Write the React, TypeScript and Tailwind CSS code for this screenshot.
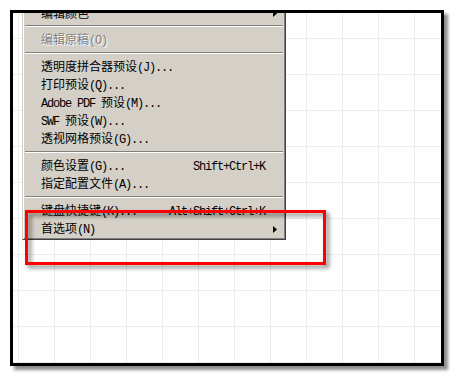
type Item =
  | { kind: "item"; label: string; shortcut?: string; submenu?: boolean; disabled?: boolean }
  | { kind: "sep" };

const items: Item[] = [
  { kind: "item", label: "编辑颜色", submenu: true },
  { kind: "sep" },
  { kind: "item", label: "编辑原稿(O)", disabled: true },
  { kind: "sep" },
  { kind: "item", label: "透明度拼合器预设(J)..." },
  { kind: "item", label: "打印预设(Q)..." },
  { kind: "item", label: "Adobe PDF 预设(M)..." },
  { kind: "item", label: "SWF 预设(W)..." },
  { kind: "item", label: "透视网格预设(G)..." },
  { kind: "sep" },
  { kind: "item", label: "颜色设置(G)...", shortcut: "Shift+Ctrl+K" },
  { kind: "item", label: "指定配置文件(A)..." },
  { kind: "sep" },
  { kind: "item", label: "键盘快捷键(K)...", shortcut: "Alt+Shift+Ctrl+K" },
  { kind: "item", label: "首选项(N)", submenu: true },
];

// ascii runs use the narrow mono face, like the half-width latin of the original menu font
function MixedText({ text }: { text: string }) {
  const parts = text.match(/[\x00-\x7f]+|[^\x00-\x7f]+/g) ?? [];
  return (
    <span className="whitespace-pre">
      {parts.map((p, i) =>
        /^[\x00-\x7f]/.test(p) ? (
          <span
            key={i}
            className="font-['Liberation_Mono',monospace] text-[12px] tracking-[-1.2px]"
          >
            {p}
          </span>
        ) : (
          <span key={i}>{p}</span>
        )
      )}
    </span>
  );
}

function Arrow() {
  return (
    <svg width="4" height="7" viewBox="0 0 4 7" className="block">
      <path d="M0 0L4 3.5L0 7Z" fill="#000" />
    </svg>
  );
}

function MenuRow({ item }: { item: Extract<Item, { kind: "item" }> }) {
  return (
    <div
      className={
        item.disabled
          ? "flex h-[18px] items-center pl-[17px] pr-[7px] leading-[18px] text-[#808080] [text-shadow:1px_1px_0_#ffffff]"
          : "flex h-[18px] items-center pl-[17px] pr-[7px] leading-[18px] text-black"
      }
    >
      <MixedText text={item.label} />
      <div className="flex-1" />
      {item.shortcut && <MixedText text={item.shortcut} />}
      <div className="flex w-[12px] justify-end">{item.submenu && <Arrow />}</div>
    </div>
  );
}

function Separator() {
  return (
    <div className="px-[1px] pb-[4px] pt-[3px]">
      <div className="h-px bg-[#808080]" />
      <div className="h-px bg-white" />
    </div>
  );
}

export default function App() {
  return (
    <div className="h-[377px] w-[454px] overflow-hidden bg-white pl-[10px] pt-[10px]">
      <div className="relative h-[356px] w-[434px] overflow-hidden border-[3px] border-black bg-white shadow-[4px_4px_3px_rgba(0,0,0,0.45)] [background-image:linear-gradient(to_right,#ededed_1px,transparent_1px),linear-gradient(to_bottom,#ededed_1px,transparent_1px)] [background-position:5px_25px] [background-size:36px_36px]">
        <div className="-mt-[12px] ml-[9px] w-[264px] border border-b-[#404040] border-l-[#d4d0c8] border-r-[#404040] border-t-[#d4d0c8] bg-[#d4d0c8] px-[1px] pb-[1px] pt-[2px] font-['Noto_Sans_CJK_SC',sans-serif] text-[12px] shadow-[inset_1px_1px_0_#ffffff,inset_-1px_-1px_0_#808080]">
          {items.map((it, i) =>
            it.kind === "sep" ? <Separator key={i} /> : <MenuRow key={i} item={it} />
          )}
        </div>

        <div className="absolute left-[12px] top-[197px] h-[55px] w-[301px] border-[3px] border-[#ff0000] drop-shadow-[3px_3px_2px_rgba(0,0,0,0.5)]" />
      </div>
    </div>
  );
}
